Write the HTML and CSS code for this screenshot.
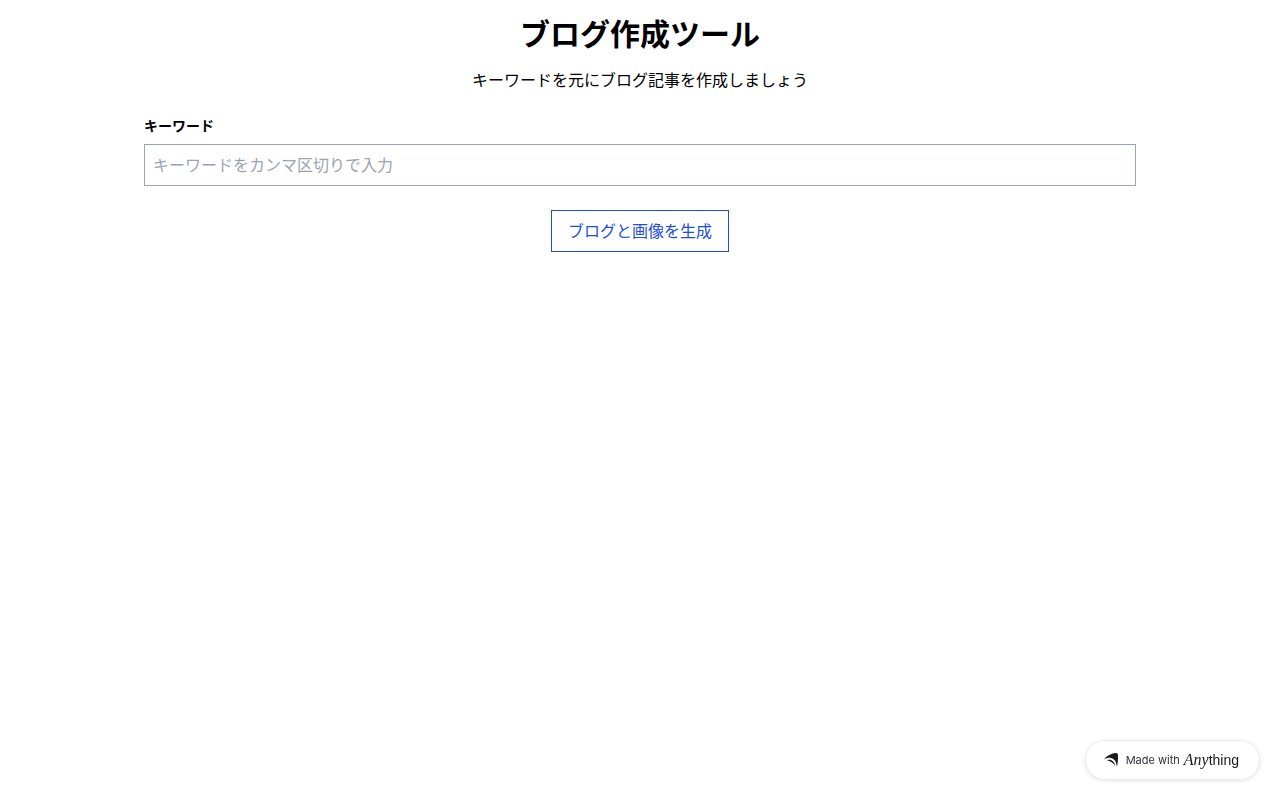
FILE: index.html
```
<!DOCTYPE html>
<html lang="ja">
<head>
    <meta charset="UTF-8">
    <meta name="viewport" content="width=device-width, initial-scale=1">
    <title>ブログ作成ツール</title>
    <link rel="stylesheet" href="styles.css">
</head>
<body>
    <main class="container">
        <h1>ブログ作成ツール</h1>
        <p class="lead">キーワードを元にブログ記事を作成しましょう</p>

        <form id="blog-form">
            <label for="keywords">キーワード</label>
            <input type="text" id="keywords" name="keywords" placeholder="キーワードをカンマ区切りで入力">
            <button type="submit">ブログと画像を生成</button>
        </form>
    </main>

    <a class="made-with" href="#">
        <svg class="made-with-icon" viewBox="0 0 14 14" aria-hidden="true">
            <path d="M0 6.600C2.500 3 6.500.500 11.500 0 13.200-.1 13.800.500 13.900 1.800 14.200 6 13.900 10 12.900 14 12.700 9 10.500 5.300 6.500 4.900 4 4.700 2 5.400 0 6.600z"/>
            <path d="M2.800 7.200C7 5.700 10.500 8 11.200 13 9.300 9.800 6.500 7.700 2.800 7.200z"/>
        </svg>
        <span class="made-with-label">Made with</span>
        <span class="wordmark"><i>Any</i><b>thing</b></span>
    </a>
</body>
</html>
```

FILE: styles.css
```
* {
    box-sizing: border-box;
}

body {
    margin: 0;
    background: white;
    color: black;
    font-family: "Noto Sans", "Noto Sans CJK JP", sans-serif;
    font-size: 16px;
    line-height: 24px;
}

.container {
    max-width: 1024px;
    margin: 0 auto;
    padding: 16px;
}

h1 {
    margin: 0 0 16px;
    font-size: 30px;
    font-weight: 700;
    line-height: 36px;
    text-align: center;
}

.lead {
    margin: 0 0 24px;
    text-align: center;
}

#blog-form {
    display: flex;
    flex-direction: column;
}

label {
    margin-bottom: 8px;
    font-size: 14px;
    font-weight: 700;
    line-height: 20px;
}

input {
    width: 100%;
    height: 42px;
    margin-bottom: 24px;
    padding: 8px;
    border: 1px solid #9ca3af;
    border-radius: 0;
    font: inherit;
}

input::placeholder {
    color: #9ca3af;
}

button {
    align-self: center;
    padding: 8px 16px;
    border: 1px solid #1d4ed8;
    background: white;
    color: #1d4ed8;
    font: inherit;
    cursor: pointer;
}

button:hover {
    background: #eff6ff;
}

/* badge floating in the bottom right corner */
.made-with {
    position: fixed;
    right: 20px;
    bottom: 20px;
    display: flex;
    align-items: center;
    height: 40px;
    padding: 0 20px 0 18px;
    border: 1px solid #ececec;
    border-radius: 20px;
    background: white;
    box-shadow: 0 1px 4px rgba(0, 0, 0, 0.1);
    color: #18191b;
    text-decoration: none;
}

.made-with-icon {
    width: 14px;
    height: 14px;
    margin-right: 8px;
    fill: #18191b;
}

.made-with-label {
    margin-right: 4px;
    color: #2f3037;
    font-family: Inter, sans-serif;
    font-size: 11px;
}

.wordmark {
    font-family: "Liberation Sans", sans-serif;
    font-size: 16px;
    white-space: nowrap;
}

.wordmark i {
    font-family: "Liberation Serif", serif;
}

.wordmark b {
    font-size: 14px;
    font-weight: 400;
}
```
